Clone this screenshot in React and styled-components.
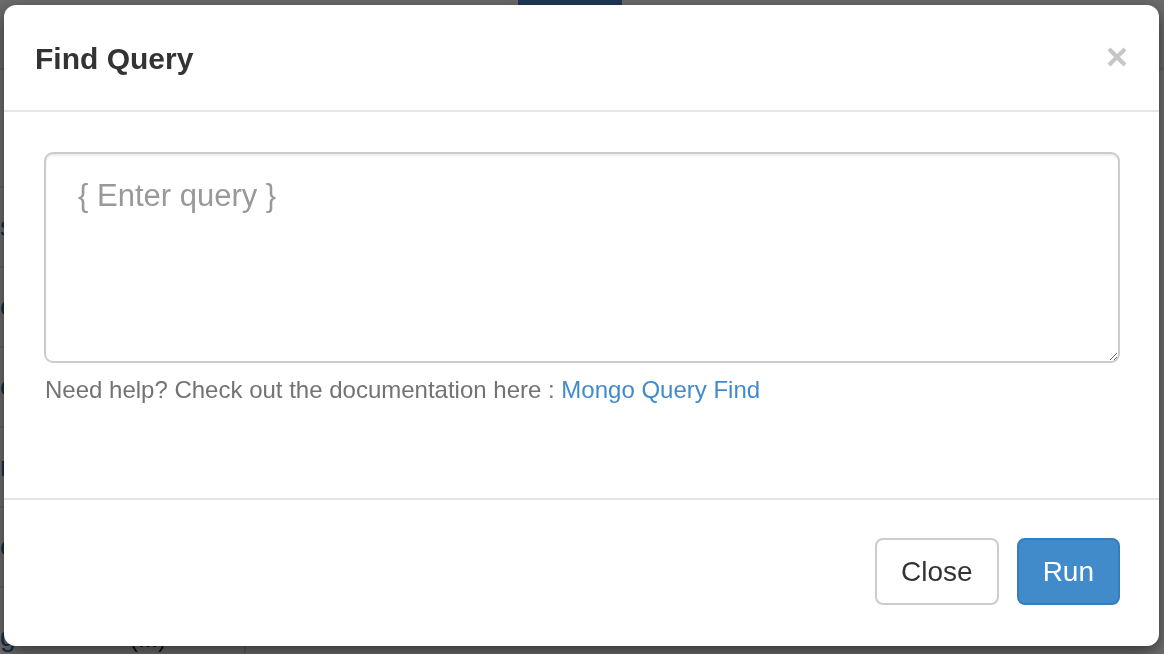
import React from 'react'
import styled, { createGlobalStyle } from 'styled-components'

const GlobalStyle = createGlobalStyle`
  html, body {
    margin: 0;
    padding: 0;
    height: 100%;
    overflow: hidden;
  }
  body {
    font-family: "Liberation Sans", Arial, Helvetica, sans-serif;
    color: #333;
    background: #fff;
  }
  * {
    box-sizing: border-box;
  }
`

const sideItems = ['s', 'e', 'e', 'n', 'e']

const App = () => {
  return (
    <>
      <GlobalStyle />
      {/* page behind the modal, mostly hidden */}
      <Page>
        <TopBar>
          <NavTab />
        </TopBar>
        <PageBody>
          <Sidebar>
            {sideItems.map((item, i) => (
              <SideItem key={i}>{item}</SideItem>
            ))}
            <SideFoot>ge</SideFoot>
          </Sidebar>
          <Content>
            <ContentRow>(...)</ContentRow>
          </Content>
        </PageBody>
      </Page>

      <Backdrop />

      <ModalLayer>
        <Modal role="dialog">
          <ModalHeader>
            <ModalTitle>Find Query</ModalTitle>
            <CloseX aria-label="Close">
              <svg width="20" height="20" viewBox="0 0 20 20">
                <path d="M2 2 L18 18 M18 2 L2 18" stroke="#c6c6c6" strokeWidth="4.2" fill="none" />
              </svg>
            </CloseX>
          </ModalHeader>

          <ModalBody>
            <QueryInput placeholder="{ Enter query }" />
            <HelpText>
              Need help? Check out the documentation here : <DocLink href="#">Mongo Query Find</DocLink>
            </HelpText>
          </ModalBody>

          <ModalFooter>
            <Button>Close</Button>
            <Button primary>Run</Button>
          </ModalFooter>
        </Modal>
      </ModalLayer>
    </>
  )
}

// background page
const Page = styled.div`
  height: 100vh;
  overflow: hidden;
  display: flex;
  flex-direction: column;
  background: #fff;
`

const TopBar = styled.div`
  height: 70px;
  flex-shrink: 0;
  background: #f4f4f4;
  border-bottom: 2px solid #ddd;
  padding-left: 518px;
  display: flex;
`

const NavTab = styled.div`
  width: 104px;
  background: #4581c8;
`

const PageBody = styled.div`
  flex: 1;
  display: flex;
  min-height: 0;
`

const Sidebar = styled.div`
  width: 246px;
  border-right: 2px solid #ddd;
  padding-top: 116px;
  display: flex;
  flex-direction: column;
`

const SideItem = styled.div`
  height: 80px;
  display: flex;
  align-items: center;
  font-size: 28px;
  color: #2a6bb5;
  border-top: 2px solid #e6e6e6;
`

const SideFoot = styled.div`
  flex: 1;
  display: flex;
  align-items: flex-end;
  font-size: 28px;
  line-height: 1.2;
  color: #2a6bb5;
  border-top: 2px solid #e6e6e6;
`

const Content = styled.div`
  flex: 1;
  display: flex;
  align-items: flex-end;
`

const ContentRow = styled.div`
  font-size: 24px;
  line-height: 1.3;
  color: #222;
  margin-left: -116px;
`

// modal
const Backdrop = styled.div`
  position: fixed;
  inset: 0;
  background: rgba(0, 0, 0, 0.56);
`

const ModalLayer = styled.div`
  position: fixed;
  inset: 0;
  padding: 5px 0 0 4px;
  display: flex;
  align-items: flex-start;
`

const Modal = styled.div`
  width: 1155px;
  height: 641px;
  background: #fff;
  border-radius: 12px;
  box-shadow: 0 6px 18px rgba(0, 0, 0, 0.55);
  display: flex;
  flex-direction: column;
  overflow: hidden;
`

const ModalHeader = styled.div`
  height: 107px;
  padding: 2px 32px 0 31px;
  border-bottom: 2px solid #e5e5e5;
  display: flex;
  align-items: center;
  justify-content: space-between;
`

const ModalTitle = styled.h4`
  margin: 0;
  font-size: 30px;
  line-height: 1;
  font-weight: 700;
  color: #333;
`

const CloseX = styled.button`
  border: none;
  background: none;
  padding: 0;
  width: 20px;
  height: 20px;
  margin-top: -3px;
  cursor: pointer;
  display: flex;

  svg {
    display: block;
  }
`

const ModalBody = styled.div`
  height: 386px;
  padding: 40px 39px 0 40px;
  display: flex;
  flex-direction: column;
`

const QueryInput = styled.textarea`
  width: 100%;
  height: 211px;
  flex-shrink: 0;
  margin: 0;
  border: 2px solid #ccc;
  border-radius: 9px;
  box-shadow: inset 0 2px 2px rgba(0, 0, 0, 0.075);
  padding: 20px 32px;
  font-family: "Liberation Sans", Arial, sans-serif;
  font-size: 31px;
  line-height: 1.43;
  color: #555;
  resize: vertical;
  outline: none;

  &::placeholder {
    color: #999;
  }
`

const HelpText = styled.div`
  margin-top: 10px;
  padding-left: 1px;
  font-size: 24px;
  line-height: 1.4;
  color: #737373;
`

const DocLink = styled.a`
  color: #428bca;
  text-decoration: none;
`

const ModalFooter = styled.div`
  height: 148px;
  border-top: 2px solid #e5e5e5;
  padding: 38px 39px 0 0;
  display: flex;
  justify-content: flex-end;
  align-items: flex-start;
  gap: 18px;
`

const Button = styled.button`
  height: 67px;
  padding: 0 24px;
  font-family: "Liberation Sans", Arial, sans-serif;
  font-size: 28px;
  border-radius: 8px;
  border: 2px solid ${(p) => (p.primary ? '#357ebd' : '#ccc')};
  background: ${(p) => (p.primary ? '#428bca' : '#fff')};
  color: ${(p) => (p.primary ? '#fff' : '#333')};
  cursor: pointer;
`

export default App
